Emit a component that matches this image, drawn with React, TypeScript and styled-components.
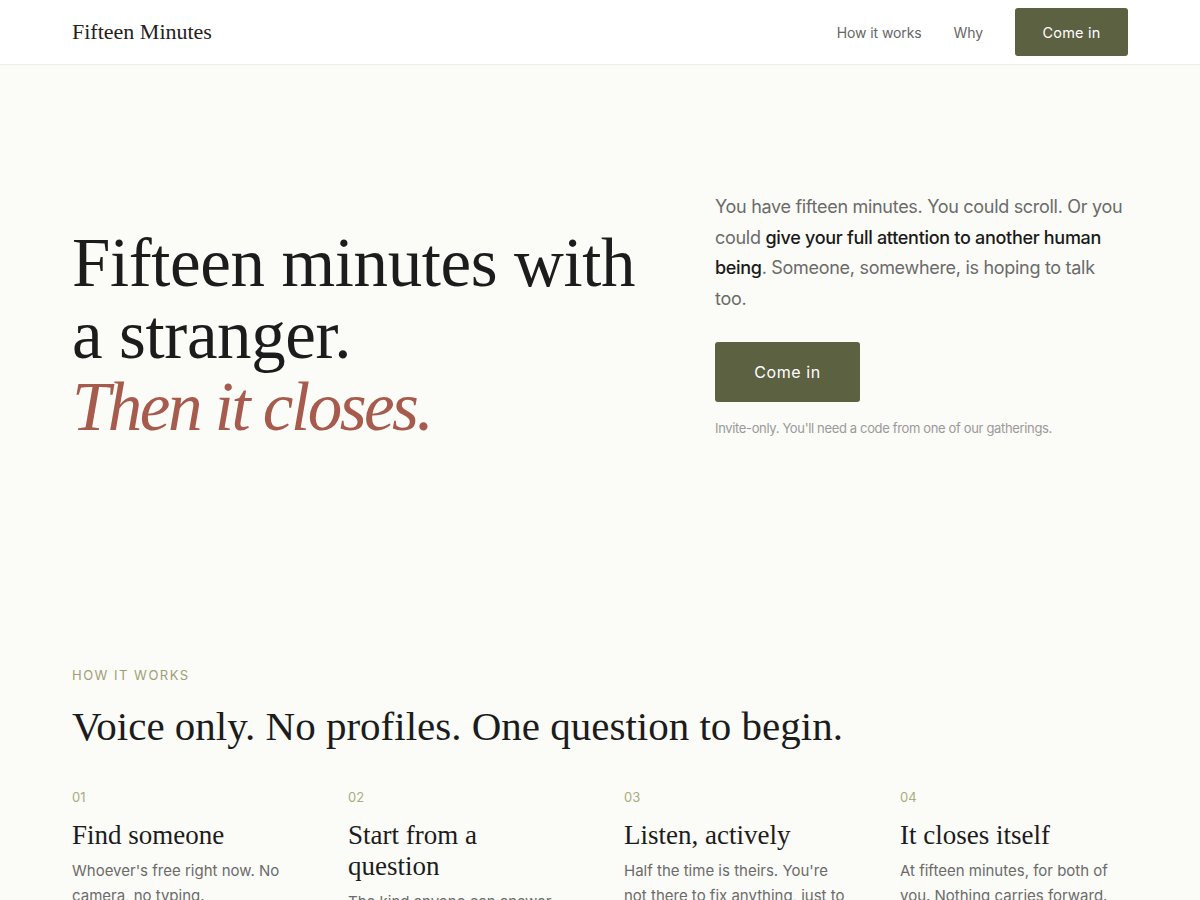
import React from 'react';
import styled, { createGlobalStyle } from 'styled-components';

const GlobalStyle = createGlobalStyle`
  * {
    box-sizing: border-box;
  }

  body {
    margin: 0;
    background: #fbfbf7;
    font-family: 'Inter', 'Noto Sans', sans-serif;
    color: #1f1f1f;
  }
`;

const serif = `'Liberation Serif', 'DejaVu Serif', serif`;

const steps = [
  {
    num: '01',
    title: 'Find someone',
    body: "Whoever's free right now. No camera, no typing.",
  },
  {
    num: '02',
    title: 'Start from a question',
    body: 'The kind anyone can answer, but nobody asks.',
  },
  {
    num: '03',
    title: 'Listen, actively',
    body: "Half the time is theirs. You're not there to fix anything, just to hear it.",
  },
  {
    num: '04',
    title: 'It closes itself',
    body: 'At fifteen minutes, for both of you. Nothing carries forward.',
  },
];

const App = () => {
  return (
    <>
      <GlobalStyle />
      <Nav>
        <Container>
          <NavInner>
            <Logo>Fifteen Minutes</Logo>
            <NavLinks>
              <NavLink href='#how'>How it works</NavLink>
              <NavLink href='#why'>Why</NavLink>
              <Button size='small'>Come in</Button>
            </NavLinks>
          </NavInner>
        </Container>
      </Nav>

      <Hero>
        <Container>
          <HeroGrid>
            <Headline>
              Fifteen minutes with
              <br />
              a stranger.
              <br />
              <Accent>Then it closes.</Accent>
            </Headline>
            <HeroSide>
              <Lead>
                You have fifteen minutes. You could scroll. Or you could{' '}
                <strong>give your full attention to another human being</strong>.
                Someone, somewhere, is hoping to talk too.
              </Lead>
              <Button size='large'>Come in</Button>
              <Fine>Invite-only. You'll need a code from one of our gatherings.</Fine>
            </HeroSide>
          </HeroGrid>
        </Container>
      </Hero>

      <Section id='how'>
        <Container>
          <Eyebrow>How it works</Eyebrow>
          <SectionTitle>Voice only. No profiles. One question to begin.</SectionTitle>
          <Steps>
            {steps.map((s) => (
              <Step key={s.num}>
                <StepNum>{s.num}</StepNum>
                <StepTitle>{s.title}</StepTitle>
                <StepBody>{s.body}</StepBody>
              </Step>
            ))}
          </Steps>
        </Container>
      </Section>
    </>
  );
};

const Container = styled.div`
  width: 1056px;
  margin: 0 auto;
`;

const Nav = styled.header`
  background: #ffffff;
  border-bottom: 1px solid #efefea;
`;

const NavInner = styled.div`
  height: 64px;
  display: flex;
  align-items: center;
  justify-content: space-between;
`;

const Logo = styled.div`
  font-family: ${serif};
  font-size: 22px;
  color: #222;
`;

const NavLinks = styled.nav`
  display: flex;
  align-items: center;
  gap: 32px;
`;

const NavLink = styled.a`
  font-size: 14px;
  letter-spacing: -0.1px;
  color: #666;
  text-decoration: none;
`;

const Button = styled.button<{ size: 'small' | 'large' }>`
  border: none;
  border-radius: 3px;
  background: #5c6142;
  color: #fff;
  font-family: inherit;
  cursor: pointer;
  font-size: ${({ size }) => (size === 'small' ? '14.5px' : '16px')};
  letter-spacing: ${({ size }) => (size === 'small' ? '0.2px' : '0.6px')};
  width: ${({ size }) => (size === 'small' ? '113px' : '145px')};
  height: ${({ size }) => (size === 'small' ? '48px' : '60px')};
`;

const Hero = styled.section`
  padding: 127px 0 128px;
`;

const HeroGrid = styled.div`
  display: grid;
  grid-template-columns: 1fr 413px;
  column-gap: 64px;
  align-items: end;
`;

const Headline = styled.h1`
  margin: 0 0 -4px;
  font-family: ${serif};
  font-weight: 400;
  font-size: 69px;
  line-height: 72px;
  letter-spacing: -0.4px;
  color: #1c1c1c;
  white-space: nowrap;
`;

const Accent = styled.em`
  color: #a65b4c;
  letter-spacing: -2.5px;
`;

const HeroSide = styled.div`
  display: flex;
  flex-direction: column;
  align-items: flex-start;
`;

const Lead = styled.p`
  margin: 0 0 28px;
  font-size: 18px;
  line-height: 30.5px;
  letter-spacing: -0.3px;
  color: #6b6b6b;

  strong {
    font-weight: 500;
    color: #1a1a1a;
  }
`;

const Fine = styled.p`
  margin: 16px 0 0;
  font-size: 13px;
  line-height: 21px;
  letter-spacing: -0.35px;
  color: #9a9a9a;
`;

const Section = styled.section`
  padding: 98px 0 80px;
`;

const Eyebrow = styled.div`
  font-size: 13px;
  line-height: 20px;
  letter-spacing: 1.5px;
  text-transform: uppercase;
  color: #9ba177;
`;

const SectionTitle = styled.h2`
  margin: 15px 0 35px;
  font-family: ${serif};
  font-weight: 400;
  font-size: 41px;
  line-height: 52px;
  color: #1c1c1c;
`;

const Steps = styled.div`
  display: grid;
  grid-template-columns: repeat(4, 1fr);
  gap: 48px;
`;

const Step = styled.div`
  display: flex;
  flex-direction: column;
`;

const StepNum = styled.div`
  font-size: 13px;
  line-height: 20px;
  color: #a8ad82;
  margin-bottom: 13px;
`;

const StepTitle = styled.h3`
  margin: 0 0 7px;
  max-width: 215px;
  font-family: ${serif};
  font-weight: 400;
  font-size: 27px;
  line-height: 31px;
  color: #1c1c1c;
`;

const StepBody = styled.p`
  margin: 0;
  font-size: 15px;
  line-height: 25px;
  color: #6b6b6b;
`;

export default App;
